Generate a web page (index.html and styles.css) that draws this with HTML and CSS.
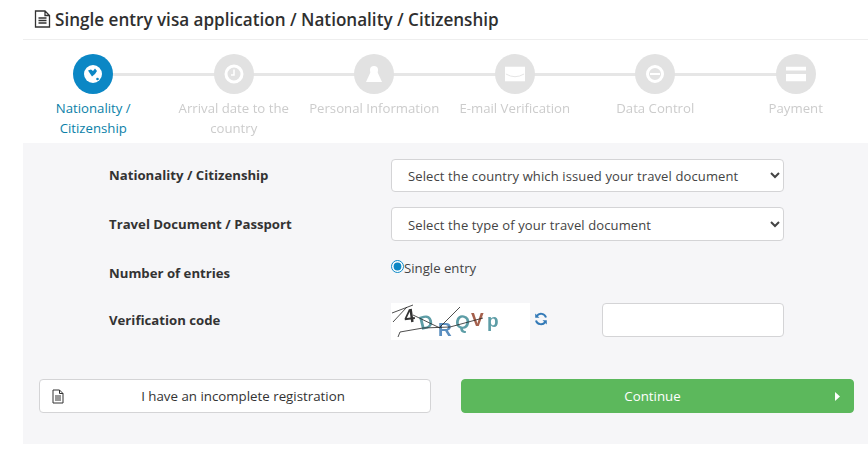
FILE: index.html
```html
<!DOCTYPE html>
<html lang="en">
<head>
<meta charset="utf-8">
<title>Single entry visa application</title>
<link rel="stylesheet" href="styles.css">
</head>
<body>
<main class="page">
  <h1 class="title">
    <svg class="title-icon" viewBox="0 0 16 18" aria-hidden="true"><path d="M1 1h9.500L15 5.500V17H1z M10.500 1v4.500H15 M4 8h8 M4 10.500h8 M4 13h8" fill="none" stroke="#333" stroke-width="1.300"/></svg>
    Single entry visa application / Nationality / Citizenship
  </h1>
  <ol class="steps">
    <li class="step active">
      <span class="dot"><svg viewBox="0 0 20 20" aria-hidden="true"><circle cx="10" cy="10" r="9" fill="#fff"/><path d="M5 6.500l3-1 2 1.500 2-2.500 2 2.500-2 3-3 2.500-2-3z" fill="#0b87c5"/><circle cx="14.500" cy="15" r="1.300" fill="#0b87c5"/></svg></span>
      <span class="label">Nationality / Citizenship</span>
    </li>
    <li class="step">
      <span class="dot"><svg viewBox="0 0 20 20" aria-hidden="true"><circle cx="10" cy="10" r="8" fill="none" stroke="#fff" stroke-width="3"/><path d="M10 5.500V11H7" fill="none" stroke="#fff" stroke-width="1.500"/></svg></span>
      <span class="label">Arrival date to the country</span>
    </li>
    <li class="step">
      <span class="dot"><svg viewBox="0 0 20 20" aria-hidden="true"><circle cx="10" cy="6" r="4" fill="#fff"/><path d="M7.500 6h5L18 18H2z" fill="#fff"/></svg></span>
      <span class="label">Personal Information</span>
    </li>
    <li class="step">
      <span class="dot"><svg viewBox="0 0 22 20" aria-hidden="true"><path d="M0 2h22v16H0z" fill="#fff"/><path d="M1 10q10 6 20 0" fill="none" stroke="#e2e2e2" stroke-width="1"/></svg></span>
      <span class="label">E-mail Verification</span>
    </li>
    <li class="step">
      <span class="dot"><svg viewBox="0 0 20 20" aria-hidden="true"><circle cx="10" cy="10" r="7.500" fill="none" stroke="#fff" stroke-width="3"/><path d="M5 10h10" stroke="#fff" stroke-width="2"/></svg></span>
      <span class="label">Data Control</span>
    </li>
    <li class="step">
      <span class="dot"><svg viewBox="0 0 28 22" aria-hidden="true"><path d="M0 1h28v5H0z M0 11h28v10H0z" fill="#fff"/></svg></span>
      <span class="label">Payment</span>
    </li>
  </ol>

  <section class="panel">
    <form class="form">
      <div class="row row-first">
        <label class="row-label row-label-first" for="country">Nationality / Citizenship</label>
        <select id="country" class="control select"><option>Select the country which issued your travel document</option></select>
      </div>
      <div class="row">
        <label class="row-label" for="doctype">Travel Document / Passport</label>
        <select id="doctype" class="control select select-tall"><option>Select the type of your travel document</option></select>
      </div>
      <div class="row row-radio">
        <span class="row-label">Number of entries</span>
        <label class="radio"><input type="radio" name="entries" checked>Single entry</label>
      </div>
      <div class="row row-captcha">
        <label class="row-label" for="code">Verification code</label>
        <div class="captcha-group">
          <svg class="captcha" viewBox="0 0 139 37" role="img" aria-label="captcha">
            <rect width="139" height="37" fill="#fff"/>
            <text x="14" y="20" class="c c-dark" transform="rotate(-8 14 20)">4</text>
            <text x="30" y="27" class="c c-teal" transform="rotate(-14 30 27)">D</text>
            <text x="47" y="33" class="c c-blue">R</text>
            <text x="63" y="24" class="c c-teal" transform="rotate(12 63 24)">Q</text>
            <text x="80" y="23" class="c c-red">V</text>
            <text x="96" y="24" class="c c-teal">p</text>
            <path d="M1 10L22 2M2 19L16 4M22 12L49 25M49 24L69 4M7 34l2-5 23-4 27-1 33-9" fill="none" stroke="#222" stroke-width=".8"/>
          </svg>
          <svg class="refresh" viewBox="0 0 14 14" aria-hidden="true"><path d="M12 5.600A5.200 5.200 0 0 0 2.800 3.900M2 8.400a5.200 5.200 0 0 0 9.200 1.700" fill="none" stroke="#337ab7" stroke-width="2"/><path d="M1.200 1.500v4.300h4.300zM12.800 12.500V8.200H8.500z" fill="#337ab7"/></svg>
          <input id="code" class="code-input" type="text">
        </div>
      </div>
      <div class="actions">
        <button type="button" class="btn btn-light">
          <svg class="btn-icon" viewBox="0 0 12 15" aria-hidden="true"><path d="M1 1h6.500L11 4.500V14H1z M7.500 1v3.500H11 M3 7h6 M3 9h6 M3 11h6" fill="none" stroke="#333" stroke-width="1"/></svg>
          <span>I have an incomplete registration</span>
        </button>
        <button type="button" class="btn btn-green">
          <span>Continue</span>
          <svg class="caret" viewBox="0 0 5 9" aria-hidden="true"><path d="M0 0l5 4.500L0 9z" fill="#fff"/></svg>
        </button>
      </div>
    </form>
  </section>
</main>
</body>
</html>
```
FILE: styles.css
```css
* { box-sizing: border-box; }
html, body { margin: 0; padding: 0; background: #fff; }
body { font-family: "Open Sans", "Liberation Sans", sans-serif; color: #333; overflow: hidden; }
.page { width: 868px; height: 453px; padding-left: 23px; }

.title {
  display: flex; align-items: center; gap: 4px;
  height: 40px; margin: 0; padding: 0 0 1px 11px;
  font-size: 17.1px; font-weight: 600; color: #2f2f2f;
  border-bottom: 1px solid #eee;
}
.title-icon { width: 17px; height: 18px; flex: none; }

.steps {
  list-style: none; margin: 0; padding: 14px 2px 0 0;
  height: 103px;
  display: grid; grid-template-columns: repeat(6, 1fr);
}
.step { position: relative; display: flex; flex-direction: column; align-items: center; text-align: center; }
.step:not(:last-child)::after {
  content: ""; position: absolute; left: 50%; width: 100%; top: 19px; height: 3px; background: #e6e6e6;
}
.step .dot {
  position: relative; z-index: 1;
  width: 40px; height: 40px; border-radius: 50%; background: #e2e2e2;
  display: flex; align-items: center; justify-content: center;
}
.dot svg { width: 20px; height: 20px; }
.step:not(.active) .dot svg { filter: blur(.6px); }
.step .label {
  margin-top: 4px; width: 136px;
  font-size: 13.2px; line-height: 20px; color: #ccc; filter: blur(.5px);
}
.step.active .dot { background: #0b87c5; }
.step.active .label { color: #0a7fa8; filter: none; }

.panel { height: 301px; background: #f6f6f8; padding: 16px 14px 0 16px; }
.row { display: flex; align-items: center; padding-left: 70px; margin-bottom: 15px; }
.row-label { width: 282px; flex: none; font-size: 13.2px; font-weight: 700; color: #333; }
.row-label-first { padding-bottom: 2px; }
.control { width: 393px; }
.select {
  height: 33px; padding: 0 8px 0 12px;
  font-family: inherit; font-size: 13px; color: #444; letter-spacing: .12px;
  background: #fff; border: 1px solid #d4d4d6; border-radius: 4px;
}
.select-tall { height: 34px; padding-top: 1px; }
.row-radio { height: 20px; margin: 21px 0 0; }
.row-radio .row-label { align-self: flex-end; }
.radio { display: flex; align-items: center; font-size: 13.2px; color: #444; height: 20px; margin-top: -9px; }
.radio input { margin: 0 0 2px; width: 13px; height: 13px; accent-color: #0b87c5; }

.row-captcha { margin: 21px 0 0; }
.row-captcha .row-label { padding-bottom: 4px; }
.captcha-group { display: flex; align-items: flex-start; width: 393px; }
.captcha { width: 139px; height: 37px; flex: none; filter: blur(.35px); }
.c { font-family: "Liberation Sans", sans-serif; font-size: 19px; font-weight: 700; }
.c-dark { fill: #333; }
.c-teal { fill: #5d9da6; }
.c-blue { fill: #5b8fc0; }
.c-red { fill: #a5604c; }
.refresh { width: 14px; height: 14px; flex: none; margin: 9px 0 0 4px; }
.code-input {
  width: 182px; height: 34px; margin-left: 54px; flex: none;
  background: #fff; border: 1px solid #d4d4d6; border-radius: 4px;
}

.actions { display: flex; gap: 30px; margin-top: 39px; }
.btn {
  position: relative; height: 34px;
  display: flex; align-items: center; justify-content: center;
  font-family: inherit; font-size: 13.3px; border-radius: 4px; padding: 0;
}
.btn-light { width: 392px; padding-left: 16px; background: #fff; border: 1px solid #d4d4d6; color: #333; }
.btn-green { width: 393px; padding-right: 10px; background: #5cb85c; border: 1px solid #5cb85c; color: #fff; }
.btn-icon { position: absolute; left: 12px; top: 9px; width: 12px; height: 15px; }
.caret { position: absolute; right: 13px; top: 12px; width: 5px; height: 9px; }
```
